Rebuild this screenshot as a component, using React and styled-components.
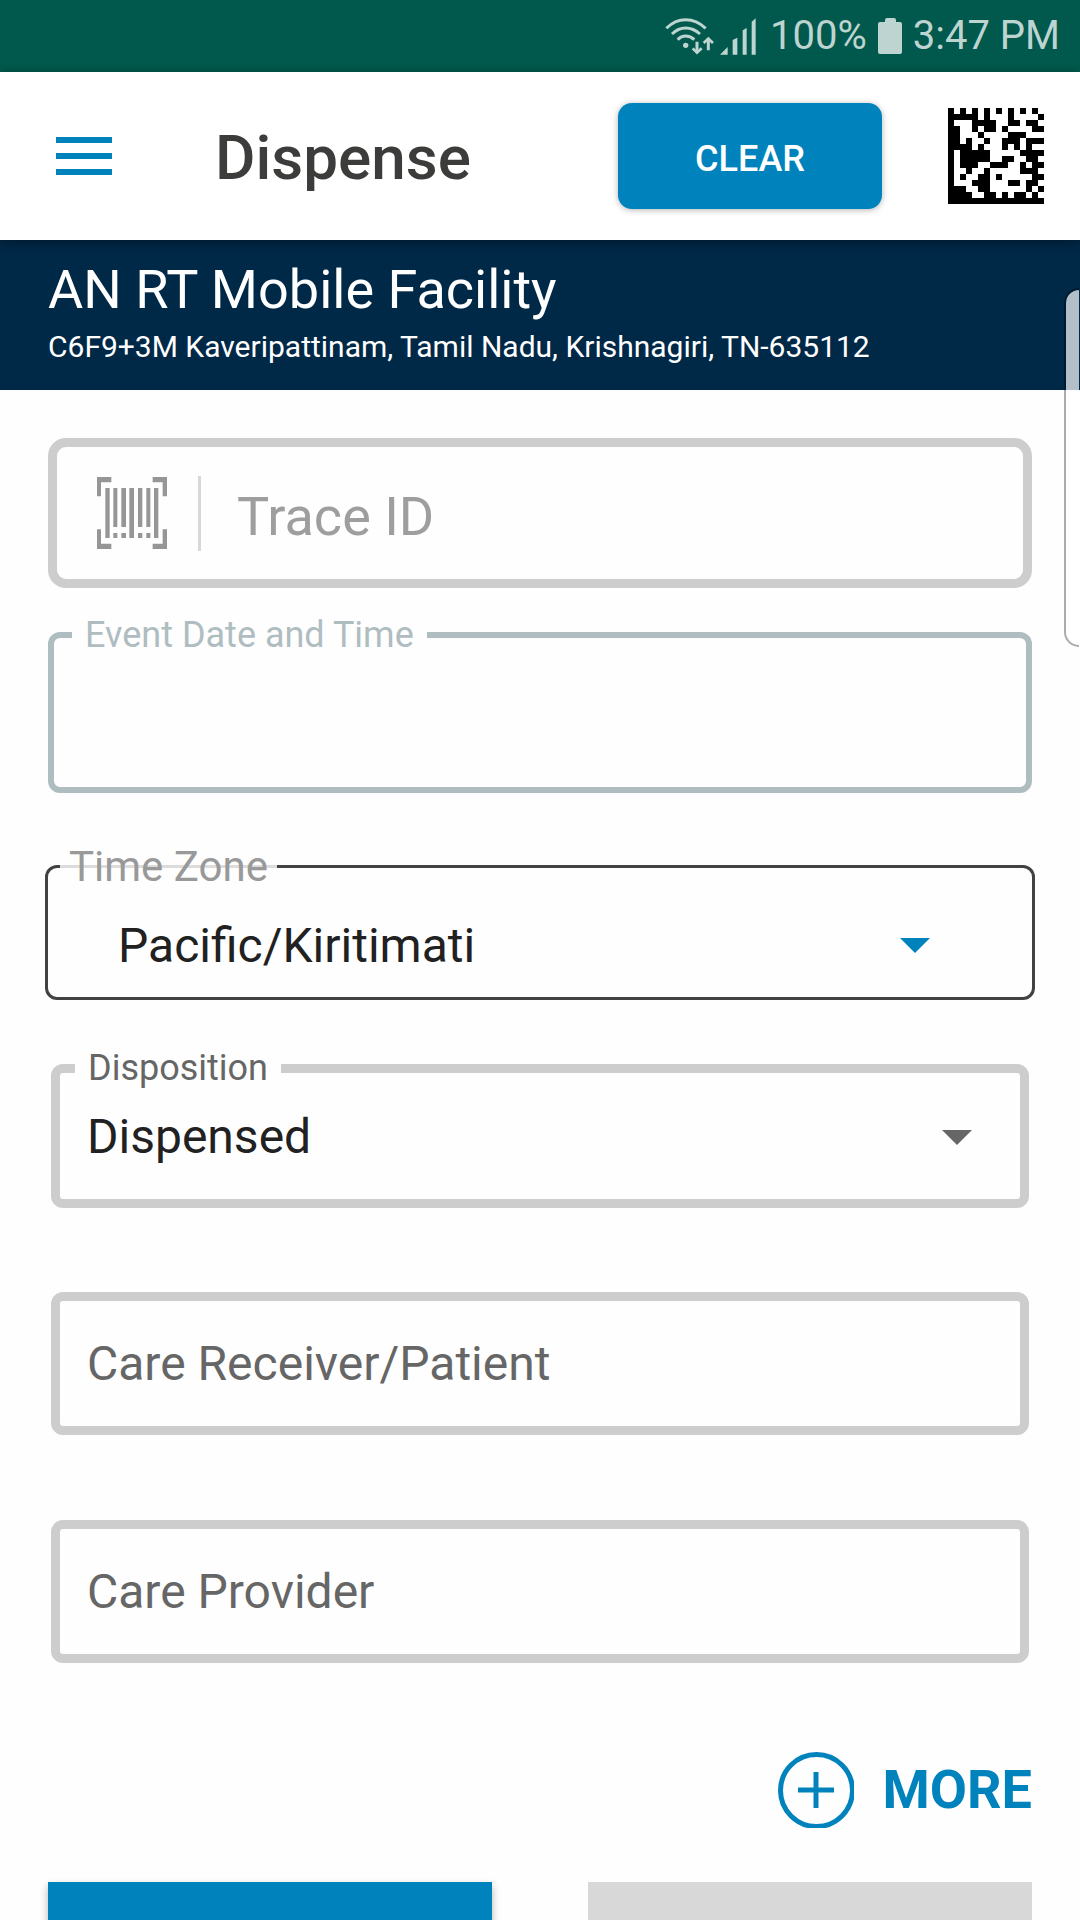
import React from 'react';
import styled, { createGlobalStyle } from 'styled-components';

const GlobalStyle = createGlobalStyle`
  * {
    box-sizing: border-box;
  }
  body {
    margin: 0;
    background: #fefefe;
    font-family: Roboto, 'Liberation Sans', sans-serif;
  }
  input, select, button {
    font-family: inherit;
  }
`

const Screen = styled.div`
  display: flex;
  flex-direction: column;
  height: 100vh;
  position: relative;
  overflow: hidden;
`

// status bar

const StatusBar = styled.div`
  display: flex;
  align-items: center;
  justify-content: flex-end;
  flex-shrink: 0;
  height: 72px;
  padding: 0 20px 0 0;
  background: #00594c;
  color: #bdd4d0;
  font-size: 40px;
  line-height: 72px;
`
const StatusIcon = styled.svg`
  display: block;
  flex-shrink: 0;
  fill: currentColor;
  margin-right: ${({ $gap }) => $gap}px;
`
const Percent = styled.span`
  margin-right: 11px;
`

// header

const Header = styled.header`
  display: flex;
  align-items: center;
  flex-shrink: 0;
  height: 168px;
  padding: 0 36px 0 56px;
  background: #fff;
  box-shadow: 0 2px 10px rgba(0, 0, 0, .4);
  z-index: 1;
`
const MenuButton = styled.button`
  display: flex;
  flex-direction: column;
  gap: 10px;
  width: 56px;
  padding: 0;
  border: none;
  background: none;
`
const MenuLine = styled.span`
  height: 6px;
  background: #0083bd;
`
const Title = styled.h1`
  flex: 1;
  margin: 0 0 0 103px;
  padding-top: 4px;
  color: #3c3c3b;
  font-size: 62px;
  font-weight: 500;
  line-height: 72px;
`
const ClearButton = styled.button`
  width: 264px;
  height: 106px;
  padding: 6px 0 0;
  border: none;
  border-radius: 14px;
  background: #0083bd;
  box-shadow: 0 1px 6px rgba(0, 0, 0, .3);
  color: #fff;
  font-size: 36px;
  font-weight: 500;
`
const MatrixButton = styled.button`
  margin-left: 66px;
  padding: 0;
  border: none;
  background: #fff;
`
const MatrixSvg = styled.svg`
  display: block;
`

// facility

const Facility = styled.section`
  flex-shrink: 0;
  height: 150px;
  padding: 18px 48px 0;
  background: #002847;
  color: #fff;
`
const FacilityName = styled.h2`
  margin: 0;
  font-size: 54px;
  font-weight: 400;
  line-height: 64px;
`
const Address = styled.p`
  margin: 0;
  padding-top: 7px;
  font-size: 30px;
  line-height: 36px;
`

// form

const Form = styled.form`
  display: flex;
  flex-direction: column;
  flex: 1;
  min-height: 0;
  padding: 48px 48px 0;
  overflow-y: auto;
  scrollbar-width: none;
  > * {
    flex-shrink: 0;
  }
`
const TraceBox = styled.div`
  display: flex;
  align-items: center;
  height: 150px;
  padding-left: 40px;
  border: 9px solid #cdcdcd;
  border-radius: 18px;
`
const Divider = styled.span`
  width: 3px;
  height: 75px;
  margin: 0 36px 0 31px;
  background: #d8d8d8;
`
const TextInput = styled.input`
  flex: 1;
  min-width: 0;
  width: 100%;
  height: 100%;
  padding: ${({ $pad }) => $pad || '0'};
  border: none;
  outline: none;
  background: none;
  color: #212121;
  font-size: ${({ $size }) => $size || 48}px;
  &::placeholder {
    color: ${({ $hint }) => $hint || '#666'};
    opacity: 1;
  }
`
const Outline = styled.fieldset`
  min-width: 0;
  margin: ${({ $margin }) => $margin};
  padding: 0;
  border: ${({ $border }) => $border};
  border-radius: 12px;
`
const Legend = styled.legend`
  margin-left: ${({ $left }) => $left}px;
  padding: 0 ${({ $pad }) => $pad || 13}px;
  color: ${({ $color }) => $color};
  font-size: 36px;
  line-height: 42px;
`
const StruckLegend = styled(Legend)`
  background: linear-gradient(#dcdcdc, #dcdcdc) center / 100% 3px no-repeat;
  padding-top: 2px;
  font-size: 42px;
  line-height: 46px;
`
const FieldRow = styled.div`
  display: grid;
  align-items: center;
  height: ${({ $height }) => $height}px;
  padding: ${({ $pad }) => $pad || '0'};
`
const Select = styled.select`
  grid-area: 1 / 1;
  width: 100%;
  padding: 0;
  appearance: none;
  border: none;
  outline: none;
  background: none;
  color: #212121;
  font-size: 48px;
  line-height: 56px;
`
const Arrow = styled.svg`
  grid-area: 1 / 1;
  justify-self: end;
  pointer-events: none;
  fill: ${({ $color }) => $color};
`
const PlainBox = styled.div`
  height: 143px;
  margin: 84px 3px 0;
  border: 9px solid #cdcdcd;
  border-radius: 12px;
  & + & {
    margin-top: 85px;
  }
`
const MoreButton = styled.button`
  display: flex;
  align-items: center;
  align-self: flex-end;
  gap: 29px;
  margin-top: 89px;
  padding: 0;
  border: none;
  background: none;
  color: #0083bd;
  font-size: 54px;
  font-weight: 700;
  line-height: 76px;
`
const Actions = styled.div`
  display: grid;
  grid-template-columns: 1fr 1fr;
  gap: 96px;
  margin-top: 54px;
  padding-bottom: 48px;
`
const ActionButton = styled.button`
  height: 132px;
  border: none;
  background: ${({ $primary }) => ($primary ? '#0083bd' : '#d8d8d8')};
  box-shadow: ${({ $primary }) => ($primary ? '0 4px 8px rgba(0, 0, 0, .3)' : 'none')};
`

// pull-out handle that floats over the right edge
const EdgeHandle = styled.div`
  position: absolute;
  top: 288px;
  right: 1px;
  width: 15px;
  height: 359px;
  border: 2px solid rgba(0, 0, 0, .32);
  border-right: none;
  border-radius: 16px 0 0 16px;
  background: rgba(255, 255, 255, .7);
  background-clip: padding-box;
  z-index: 2;
`

const MATRIX = [
  '1010101010101010',
  '1111101000100001',
  '1000111100110110',
  '1100101101000011',
  '1100010000111000',
  '1101001001110111',
  '1111010001010100',
  '1011111000001111',
  '1011111001100110',
  '1011100111001011',
  '1001001000001110',
  '1010011010000011',
  '1000111000110110',
  '1110011000000101',
  '1111001101011010',
  '1111111111111111',
]

const matrixPath = MATRIX.map((row, y) => (
  row.split('').map((cell, x) => (cell === '1' ? `M${x} ${y}h1v1h-1z` : '')).join('')
)).join('')

const DataMatrix = () => (
  <MatrixSvg width="96" height="96" viewBox="0 0 16 16" shapeRendering="crispEdges">
    <path d={matrixPath} />
  </MatrixSvg>
)

const Wifi = () => (
  <StatusIcon $gap={6} width="49" height="37" viewBox="83 47 147 111">
    <g fill="none" stroke="currentColor" strokeWidth="9">
      <path d="M87 78Q112 52 145 52T205 78" />
      <path d="M104 95Q122 77 145 77T188 95" />
      <path d="M121 112Q131 101 145 101T171 112" />
      <path d="M179 118V148M213 111V144" />
      <path d="M166 138L179 151L193 138M199 122L213 109L227 122" strokeWidth="8" />
    </g>
    <circle cx="145" cy="129" r="8" />
  </StatusIcon>
)

const Signal = () => (
  <StatusIcon $gap={14} width="36" height="37" viewBox="247 47 108 111">
    <path d="M247 157L270 134V157ZM285 113L299 106V157H285ZM315 84L327 77V157H315ZM342 58L354 48V157H342Z" />
  </StatusIcon>
)

const Battery = () => (
  <StatusIcon $gap={11} width="24" height="36" viewBox="0 0 24 36">
    <path d="M7 2Q7 0 9 0H16Q18 0 18 2V4H22Q24 4 24 6V34Q24 36 22 36H2Q0 36 0 34V6Q0 4 2 4H7Z" />
  </StatusIcon>
)

const Barcode = () => (
  <svg width="70" height="72" viewBox="0 0 210 216" fill="#969696">
    <path d="M0 0H43V16H12V58H0ZM167 0H210V58H197V16H167ZM0 157H12V200H43V216H0ZM197 157H210V216H167V200H197Z" />
    <path d="M25 33H38V183H25ZM97 33H111V183H97ZM171 33H184V183H171Z" />
    <path d="M49 33H61V150H49ZM73 33H87V150H73ZM123 33H136V150H123ZM148 33H160V150H148Z" />
    <path d="M49 168H61V183H49ZM73 168H87V183H73ZM123 168H136V183H123ZM148 168H160V183H148Z" />
  </svg>
)

const DropArrow = ({ color }) => (
  <Arrow width="30" height="15" viewBox="0 0 30 15" $color={color}>
    <path d="M0 0H30L15 15Z" />
  </Arrow>
)

const PlusCircle = () => (
  <svg width="76" height="76" viewBox="0 0 76 76" fill="none" stroke="currentColor" strokeWidth="5">
    <circle cx="38.5" cy="38.5" r="36" />
    <path d="M20 38H56M38 20V56" />
  </svg>
)

export default function App() {
  return (
    <Screen>
      <GlobalStyle />
      <StatusBar>
        <Wifi />
        <Signal />
        <Percent>100%</Percent>
        <Battery />
        <span>3:47 PM</span>
      </StatusBar>
      <Header>
        <MenuButton type="button" aria-label="Menu">
          <MenuLine />
          <MenuLine />
          <MenuLine />
        </MenuButton>
        <Title>Dispense</Title>
        <ClearButton type="button">CLEAR</ClearButton>
        <MatrixButton type="button" aria-label="Scan code">
          <DataMatrix />
        </MatrixButton>
      </Header>
      <Facility>
        <FacilityName>AN RT Mobile Facility</FacilityName>
        <Address>C6F9+3M Kaveripattinam, Tamil Nadu, Krishnagiri, TN-635112</Address>
      </Facility>
      <Form>
        <TraceBox>
          <Barcode />
          <Divider />
          <TextInput aria-label="Trace ID" placeholder="Trace ID" $size={54} $hint="#9e9e9e" $pad="6px 0 0" />
        </TraceBox>

        <Outline $margin="26px 0 0" $border="6px solid #afbdc1">
          <Legend $left={18} $color="#afbdc1">
            <label htmlFor="event-date">Event Date and Time</label>
          </Legend>
          <FieldRow $height={131}>
            <TextInput id="event-date" $pad="0 32px" />
          </FieldRow>
        </Outline>

        <Outline $margin="49px -3px 0" $border="3px solid #424242">
          <StruckLegend $left={12} $pad={9} $color="#999">
            <label htmlFor="time-zone">Time Zone</label>
          </StruckLegend>
          <FieldRow $height={107} $pad="4px 102px 0 70px">
            <Select id="time-zone" defaultValue="Pacific/Kiritimati">
              <option>Pacific/Kiritimati</option>
            </Select>
            <DropArrow color="#0083bd" />
          </FieldRow>
        </Outline>

        <Outline $margin="47px 3px 0" $border="9px solid #cdcdcd">
          <Legend $left={15} $color="#666">
            <label htmlFor="disposition">Disposition</label>
          </Legend>
          <FieldRow $height={110} $pad="0 48px 14px 27px">
            <Select id="disposition" defaultValue="Dispensed">
              <option>Dispensed</option>
            </Select>
            <DropArrow color="#666" />
          </FieldRow>
        </Outline>

        <PlainBox>
          <TextInput aria-label="Care Receiver/Patient" placeholder="Care Receiver/Patient" $pad="0 27px" />
        </PlainBox>
        <PlainBox>
          <TextInput aria-label="Care Provider" placeholder="Care Provider" $pad="0 27px" />
        </PlainBox>

        <MoreButton type="button">
          <PlusCircle />
          MORE
        </MoreButton>

        <Actions>
          <ActionButton type="submit" aria-label="Submit" $primary />
          <ActionButton type="button" aria-label="Cancel" />
        </Actions>
      </Form>
      <EdgeHandle />
    </Screen>
  )
}
